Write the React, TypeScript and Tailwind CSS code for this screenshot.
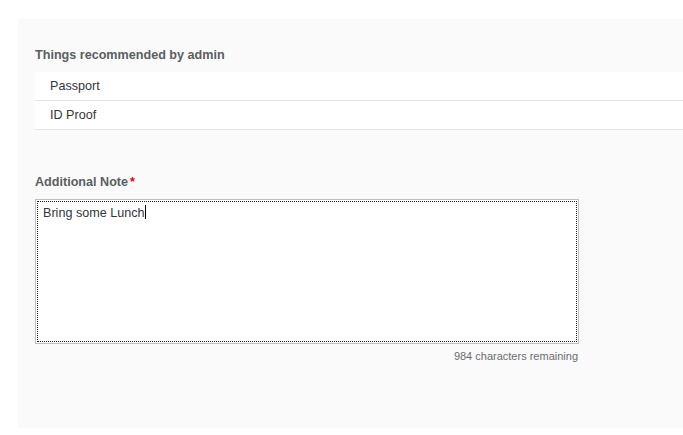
import React from 'react'

const ITEMS = ["Passport", "ID Proof"];

const App = () => {
  return (
    <div className="w-[683px] h-[435px] bg-white pt-[19px] pl-[18px] pb-[7px] font-['Liberation_Sans',sans-serif]">
      <div className="h-[409px] bg-[#fafafa] pl-[17px] pt-[27px]">
        <h3 className="text-[12.6px] font-bold text-[#5b5e61] leading-[18px]">Things recommended by admin</h3>
        <ul className="mt-[8px]">
          {ITEMS.map((item) => (
            <li
              key={item}
              className="h-[29px] bg-white border-b border-[#e5e5e5] pl-[15px] flex items-center text-[12.6px] text-[#32363a]"
            >
              {item}
            </li>
          ))}
        </ul>

        <div className="mt-[43px] w-[544px]">
          <label className="block text-[12.6px] font-bold text-[#5b5e61] leading-[18px]">
            Additional Note<span className="text-[#e00] ml-[2px]">*</span>
          </label>
          <div className="mt-[8px] h-[145px] border border-[#bfbfbf] bg-white p-px">
            <div className="h-full border border-dotted border-[#222] px-[5px] pt-[2px] text-[12.6px] text-[#32363a] leading-[18px]">
              Bring some Lunch<span className="inline-block w-px h-[14px] bg-black align-[-2px]"></span>
            </div>
          </div>
          <p className="mt-[4px] text-right text-[11px] text-[#6a6d70] pr-px">984 characters remaining</p>
        </div>
      </div>
    </div>
  )
}

export default App
